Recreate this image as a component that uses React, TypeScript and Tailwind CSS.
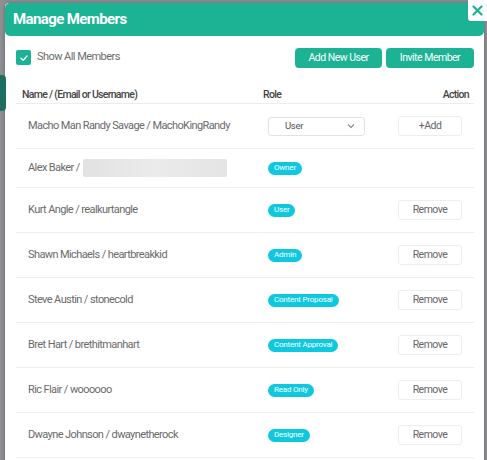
import React from "react";

const rows: { name: string; role?: string; blurred?: boolean; action: "add" | "remove" | "none"; select?: boolean }[] = [
  { name: "Macho Man Randy Savage / MachoKingRandy", action: "add", select: true },
  { name: "Alex Baker / ", blurred: true, role: "Owner", action: "none" },
  { name: "Kurt Angle / realkurtangle", role: "User", action: "remove" },
  { name: "Shawn Michaels / heartbreakkid", role: "Admin", action: "remove" },
  { name: "Steve Austin / stonecold", role: "Content Proposal", action: "remove" },
  { name: "Bret Hart / brethitmanhart", role: "Content Approval", action: "remove" },
  { name: "Ric Flair / woooooo", role: "Read Only", action: "remove" },
  { name: "Dwayne Johnson / dwaynetherock", role: "Designer", action: "remove" },
];

export default function App() {
  return (
    <div
      className="relative w-[487px] h-[460px] overflow-hidden bg-[#8e9094]"
      style={{ fontFamily: "Roboto, 'Liberation Sans', sans-serif" }}
    >
      <div className="absolute left-0 top-[75px] w-[6px] h-[36px] bg-[#1d6e5e] rounded-r-sm" />
      <div className="ml-[5px] mt-[3px] w-[479px] h-[470px] bg-white rounded-t-[4px] flex flex-col shadow-[0_0_4px_rgba(0,0,0,0.3)]">
        <div className="h-[33px] bg-[#1bb394] rounded-[5px] flex items-center pl-[8px]">
          <span className="text-white font-bold text-[15px] tracking-[-0.6px]">Manage Members</span>
        </div>
        <div className="pl-[11px] pr-[10px] pt-[12px]">
          <div className="flex items-center h-[19px]">
            <div className="flex items-center">
              <div className="w-[15px] h-[15px] rounded-[2px] bg-[#1bb394] flex items-center justify-center">
                <svg width="10" height="10" viewBox="0 0 10 10">
                  <path d="M2 5.2 L4.2 7.2 L8 3" stroke="white" strokeWidth="1.3" fill="none" strokeLinecap="round" strokeLinejoin="round" />
                </svg>
              </div>
              <span className="ml-[6px] text-[11px] tracking-[-0.55px] text-[#6b6b6b]">Show All Members</span>
            </div>
            <div className="ml-auto flex gap-[4px]">
              <button className="w-[87px] h-[20px] bg-[#1bb394] text-white text-[10.5px] tracking-[-0.5px] rounded-[4px]">Add New User</button>
              <button className="w-[88px] h-[20px] bg-[#1bb394] text-white text-[10.5px] tracking-[-0.5px] rounded-[4px]">Invite Member</button>
            </div>
          </div>
          <div className="mt-[19px] w-[458px]">
            <div className="flex items-center h-[17px] border-b border-[#ececec] box-content">
              <div className="w-[241px] pl-[6px] text-[10.5px] font-medium tracking-[-0.7px] text-[#444]">Name / (Email or Username)</div>
              <div className="w-[120px] pl-[6px] text-[10.5px] font-medium tracking-[-0.7px] text-[#444]">Role</div>
              <div className="flex-1 text-right pr-[5px] text-[10.5px] font-medium tracking-[-0.7px] text-[#444]">Action</div>
            </div>
            {rows.map((r, i) => (
              <div
                key={i}
                className={`flex items-center border-b border-[#efefef] ${r.action === "none" ? "h-[39px]" : "h-[45px]"}`}
              >
                <div className="w-[241px] pl-[12px] text-[11px] tracking-[-0.6px] text-[#6a6a6a] flex items-center whitespace-nowrap">
                  <span>{r.name}</span>
                  {r.blurred && (
                    <span className="ml-[3px] inline-block w-[144px] h-[18px] bg-gradient-to-r from-[#e2e2e2] via-[#ebebeb] to-[#e4e4e4] rounded-[2px]" />
                  )}
                </div>
                <div className="w-[120px] pl-[11px] flex items-center">
                  {r.select ? (
                    <div className="w-[97px] h-[19px] border border-[#e2e2e2] rounded-[3px] flex items-center pl-[16px] pr-[9px] text-[9.5px] tracking-[-0.3px] text-[#555]">
                      <span>User</span>
                      <svg className="ml-auto" width="8" height="6" viewBox="0 0 8 6">
                        <path d="M1 1.5 L4 4.5 L7 1.5" stroke="#888" strokeWidth="1.1" fill="none" />
                      </svg>
                    </div>
                  ) : (
                    <span className="inline-flex items-center h-[13px] px-[6px] rounded-full bg-[#0ec8e0] text-white text-[8px] tracking-[-0.2px] leading-none">
                      {r.role}
                    </span>
                  )}
                </div>
                <div className="flex-1 flex justify-end pr-[12px]">
                  {r.action !== "none" && (
                    <button className="w-[64px] h-[20px] border border-[#ededed] rounded-[3px] bg-white text-[10.5px] tracking-[-0.5px] text-[#666]">
                      {r.action === "add" ? "+Add" : "Remove"}
                    </button>
                  )}
                </div>
              </div>
            ))}
          </div>
        </div>
      </div>
      <div className="absolute top-0 right-0 w-[19px] h-[21px] bg-white rounded-bl-[3px] flex items-center justify-center">
        <svg width="11" height="11" viewBox="0 0 11 11">
          <path d="M1.5 1.5 L9.5 9.5 M9.5 1.5 L1.5 9.5" stroke="#1bb394" strokeWidth="2.2" strokeLinecap="round" />
        </svg>
      </div>
    </div>
  );
}
